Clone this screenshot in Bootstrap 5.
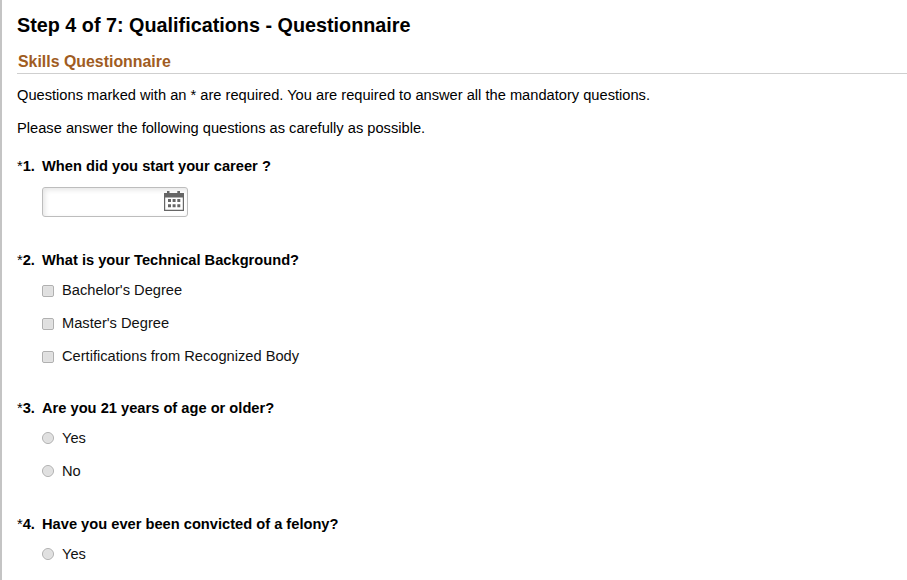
<!DOCTYPE html>
<html lang="en">
<head>
<meta charset="utf-8">
<title>Step 4 of 7</title>
<link href="https://cdn.jsdelivr.net/npm/bootstrap@5.3.0/dist/css/bootstrap.min.css" rel="stylesheet">
<style>
html, body { height: 100%; overflow: hidden; }
body { font-family: "Liberation Sans", Arial, sans-serif; font-size: 14.67px; color: #000; background: #fff; }
.page-frame { border-left: 2px solid #c4c4c4; height: 580px; overflow: hidden; padding: 14px 0 0 15px; }
.step-title { font-size: 19.8px; font-weight: 700; line-height: 23px; margin: 0 0 16px; color: #000; }
.section-head { font-size: 15.9px; font-weight: 700; line-height: 18px; color: #a05c22; padding: 0 0 2px 1px; margin: 0 0 13px; border-bottom: 1px solid #cfcfcf; }
.intro { line-height: 16px; margin: 0 0 17px; }
.intro-last { margin-bottom: 22px; }
.q-block { margin-bottom: 28px; }
.q-date { margin-bottom: 35px; }
.q-tall { margin-bottom: 29px; }
.q-title { display: flex; font-weight: 700; line-height: 16px; margin: 0; }
.q-num { width: 25px; flex: none; }
.q-star { font-weight: 400; }
.date-box { width: 146px; height: 30px; margin: 13px 0 0 25px; border: 1px solid #bdbdbd; border-radius: 3px; box-shadow: inset 2px 2px 5px #e6e6e6; background: #fff; padding: 0 3px 2px 0; }
.opt-list { margin: 5px 0 0 25px; }
.opt-row { height: 33px; gap: 8px; }
.opt-check, .opt-radio { appearance: none; -webkit-appearance: none; width: 12px; height: 12px; margin: 0; flex: none; background: #e0e0e0; border: 1px solid #b0b0b0; box-shadow: inset 0 0 1px #fff; }
.opt-check { border-radius: 2px; margin-top: 2px; }
.opt-radio { border-radius: 50%; }
.opt-row label { line-height: 16px; color: #111; }
</style>
</head>
<body>
<main class="page-frame">
  <h1 class="step-title">Step 4 of 7: Qualifications - Questionnaire</h1>
  <h2 class="section-head">Skills Questionnaire</h2>
  <p class="intro">Questions marked with an * are required. You are required to answer all the mandatory questions.</p>
  <p class="intro intro-last">Please answer the following questions as carefully as possible.</p>

  <section class="q-block q-date">
    <div class="q-title"><span class="q-num"><span class="q-star">*</span>1.</span><span>When did you start your career ?</span></div>
    <div class="date-box d-flex align-items-center justify-content-end">
      <svg width="20" height="20" viewBox="0 0 20 20" aria-hidden="true">
        <path fill="#666" fill-rule="evenodd" d="M0 2h3V0h2.500v2h7.800V0h2.700v2h4v18H0zM1.200 6.500v12.300h17.600V6.500z"/>
        <path fill="#666" d="M4 8h3v3H4zM8.600 8h3v3h-3zM13.300 8h3v3h-3zM4 13.300h3v3H4zM8.600 13.300h3v3h-3zM13.300 13.300h3v3h-3z"/>
      </svg>
    </div>
  </section>

  <section class="q-block">
    <div class="q-title"><span class="q-num"><span class="q-star">*</span>2.</span><span>What is your Technical Background?</span></div>
    <div class="opt-list">
      <div class="opt-row d-flex align-items-center"><input class="opt-check" type="checkbox" id="o1"><label for="o1">Bachelor's Degree</label></div>
      <div class="opt-row d-flex align-items-center"><input class="opt-check" type="checkbox" id="o2"><label for="o2">Master's Degree</label></div>
      <div class="opt-row d-flex align-items-center"><input class="opt-check" type="checkbox" id="o3"><label for="o3">Certifications from Recognized Body</label></div>
    </div>
  </section>

  <section class="q-block q-tall">
    <div class="q-title"><span class="q-num"><span class="q-star">*</span>3.</span><span>Are you 21 years of age or older?</span></div>
    <div class="opt-list">
      <div class="opt-row d-flex align-items-center"><input class="opt-radio" type="radio" name="q3" id="r1"><label for="r1">Yes</label></div>
      <div class="opt-row d-flex align-items-center"><input class="opt-radio" type="radio" name="q3" id="r2"><label for="r2">No</label></div>
    </div>
  </section>

  <section class="q-block">
    <div class="q-title"><span class="q-num"><span class="q-star">*</span>4.</span><span>Have you ever been convicted of a felony?</span></div>
    <div class="opt-list">
      <div class="opt-row d-flex align-items-center"><input class="opt-radio" type="radio" name="q4" id="r3"><label for="r3">Yes</label></div>
    </div>
  </section>
</main>
<script src="https://cdn.jsdelivr.net/npm/bootstrap@5.3.0/dist/js/bootstrap.bundle.min.js"></script>
</body>
</html>
